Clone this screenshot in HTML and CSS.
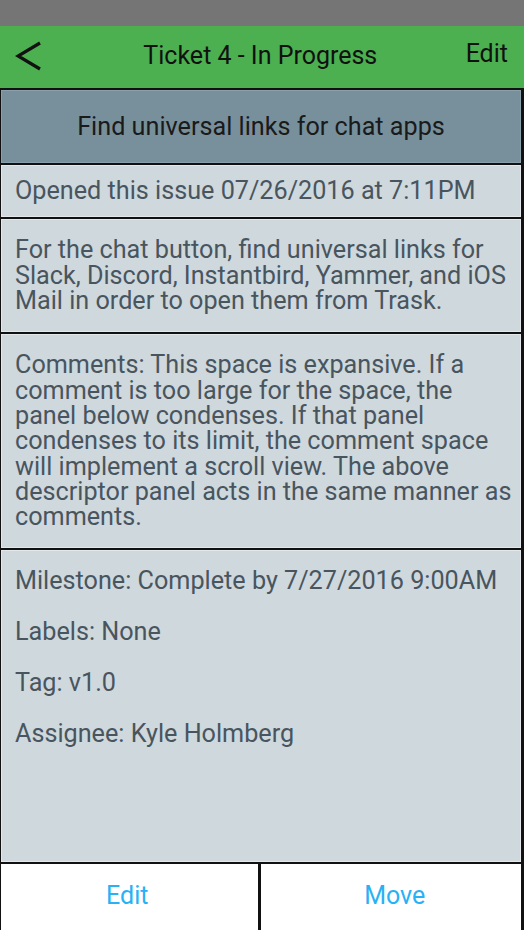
FILE: index.html
```html
<!DOCTYPE html>
<html>
<head>
<meta charset="utf-8">
<link rel="stylesheet" href="styles.css">
</head>
<body>
<div class="screen">
  <div class="statusbar"></div>
  <header class="navbar">
    <svg class="back" width="28" height="30" viewBox="0 0 28 30" aria-label="Back">
      <polyline points="25,2 3,15 25,28" fill="none" stroke="#111" stroke-width="3.2" stroke-linejoin="miter"/>
    </svg>
    <span class="nav-title">Ticket 4 - In Progress</span>
    <span class="nav-edit">Edit</span>
  </header>
  <main class="content">
    <section class="panel title-panel">Find universal links for chat apps</section>
    <section class="panel opened-panel">Opened this issue 07/26/2016 at 7:11PM</section>
    <section class="panel text-panel">For the chat button, find universal links for Slack, Discord, Instantbird, Yammer, and iOS Mail in order to open them from Trask.</section>
    <section class="panel text-panel">Comments: This space is expansive. If a comment is too large for the space, the panel below condenses. If that panel condenses to its limit, the comment space will implement a scroll view. The above descriptor panel acts in the same manner as comments.</section>
    <section class="panel meta-panel">
      <p class="meta">Milestone: Complete by 7/27/2016 9:00AM</p>
      <p class="meta">Labels: None</p>
      <p class="meta">Tag: v1.0</p>
      <p class="meta">Assignee: Kyle Holmberg</p>
    </section>
    <div class="actions">
      <button class="action action-edit">Edit</button>
      <button class="action action-move">Move</button>
    </div>
  </main>
</div>
</body>
</html>
```

FILE: styles.css
```css
* { box-sizing: border-box; }
html, body { margin: 0; padding: 0; }
body {
  font-family: Roboto, "Liberation Sans", sans-serif;
  background: #111;
}
.screen {
  width: 524px;
  height: 930px;
  display: flex;
  flex-direction: column;
  overflow: hidden;
}
.statusbar {
  height: 26px;
  background: #757575;
  flex: none;
}
.navbar {
  height: 62px;
  flex: none;
  background: #4caf50;
  display: flex;
  align-items: center;
  justify-content: space-between;
  padding: 0 16px 4px 15px;
  color: #111;
}
.back {
  display: block;
  margin-top: 2px;
}
.nav-title {
  font-size: 25px;
  line-height: 30px;
  margin-left: 12px;
  margin-top: 2px;
}
.nav-edit {
  font-size: 25px;
  line-height: 30px;
  margin-top: -2px;
}
.content {
  flex: 1;
  display: flex;
  flex-direction: column;
  gap: 2px;
  padding: 2px 3px 0 1px;
  background: #111;
}
.panel {
  border: 1px solid #e3e8eb;
  background: #cfd8dc;
  color: #48555f;
  font-size: 25.2px;
  line-height: 25.3px;
  padding: 12.35px 4px 12.35px 13px;
  flex: none;
}
.title-panel {
  background: #78909c;
  border-color: #8aa0ab;
  color: #1a1a1a;
  text-align: center;
  padding: 22.85px 8px;
}
.text-panel { padding-top: 17.5px; padding-bottom: 17.5px; }
.meta-panel {
  flex: 1;
  padding-top: 17.4px;
}
.meta {
  margin: 0 0 25.7px;
}
.actions {
  height: 66px;
  flex: none;
  display: flex;
  gap: 3px;
}
.action {
  flex: 1;
  border: none;
  background: #fff;
  color: #29b1f5;
  font-family: Roboto, "Liberation Sans", sans-serif;
  font-size: 25px;
  padding: 0 0 4px;
}
.action-edit { padding-right: 4px; }
.action-move { padding-left: 8px; }
```
